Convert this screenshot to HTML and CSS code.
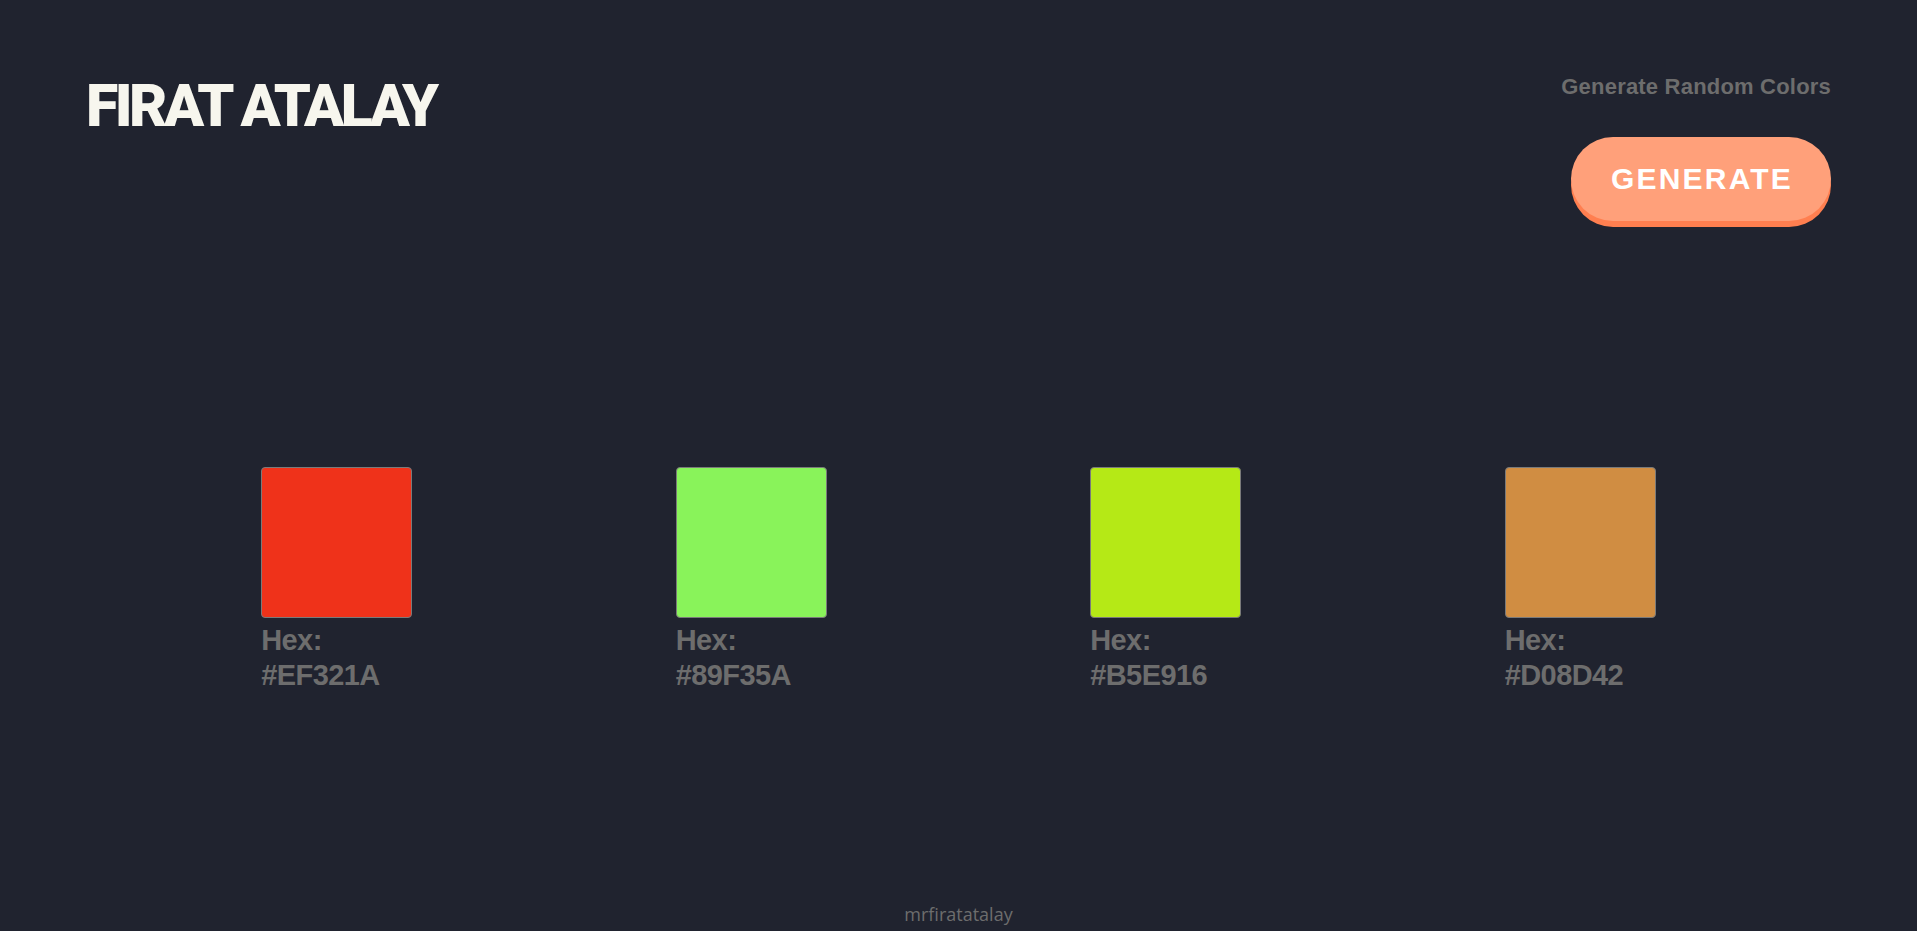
FILE: index.html
```html
<!DOCTYPE html>
<html lang="en">
<head>
<meta charset="utf-8">
<title>Firat Atalay - Random Colors</title>
<link rel="stylesheet" href="styles.css">
</head>
<body>
<div class="page">
  <header class="header">
    <h1 class="title">FIRAT ATALAY</h1>
    <div class="actions">
      <p class="subtitle">Generate Random Colors</p>
      <button class="generate">GENERATE</button>
    </div>
  </header>
  <main class="palette">
    <div class="color">
      <div class="swatch" style="background:#EF321A"></div>
      <div class="hex">Hex:<br>#EF321A</div>
    </div>
    <div class="color">
      <div class="swatch" style="background:#89F35A"></div>
      <div class="hex">Hex:<br>#89F35A</div>
    </div>
    <div class="color">
      <div class="swatch" style="background:#B5E916"></div>
      <div class="hex">Hex:<br>#B5E916</div>
    </div>
    <div class="color">
      <div class="swatch" style="background:#D08D42"></div>
      <div class="hex">Hex:<br>#D08D42</div>
    </div>
  </main>
  <footer class="footer">mrfiratatalay</footer>
</div>
</body>
</html>
```
FILE: styles.css
```css
html, body {
  margin: 0;
  padding: 0;
  background: #20232f;
}

.page {
  min-height: 100vh;
  display: flex;
  flex-direction: column;
  font-family: "Liberation Sans", Arial, sans-serif;
}

.header {
  display: flex;
  justify-content: space-between;
  align-items: flex-start;
  padding: 72px 86px 0 86px;
}

.title {
  margin: 5px 0 0 0;
  font-family: Roboto, "Liberation Sans", sans-serif;
  font-size: 59px;
  line-height: 58px;
  font-weight: 900;
  letter-spacing: -3.5px;
  color: #f7f6ee;
}

.actions {
  display: flex;
  flex-direction: column;
  align-items: flex-end;
}

.subtitle {
  margin: 2px 0 0 0;
  font-size: 22px;
  line-height: 26px;
  font-weight: 700;
  letter-spacing: 0.2px;
  color: #6d6d6d;
}

.generate {
  margin-top: 37px;
  width: 260px;
  height: 84px;
  border: none;
  border-radius: 42px;
  background: #ffa07a;
  box-shadow: 0 6px 0 #ff7f50;
  color: #ffffff;
  font-family: "Liberation Sans", Arial, sans-serif;
  font-size: 30px;
  font-weight: 700;
  letter-spacing: 2.2px;
  padding: 0 0 0 2px;
  cursor: pointer;
}

.palette {
  flex: 1;
  width: 1658px;
  margin: 246px auto 0;
  display: grid;
  grid-template-columns: repeat(4, 1fr);
  justify-items: center;
  align-content: start;
}

.color {
  width: 151px;
}

.swatch {
  box-sizing: border-box;
  width: 151px;
  height: 151px;
  border: 1px solid #7a7a7a;
  border-radius: 4px;
}

.hex {
  margin-top: 5px;
  font-size: 29px;
  line-height: 35px;
  font-weight: 700;
  letter-spacing: -0.6px;
  color: #6d6d6d;
}

.footer {
  text-align: center;
  font-family: "Open Sans", sans-serif;
  font-size: 18px;
  line-height: 24px;
  color: #6d6d6d;
  padding-bottom: 5px;
}
```
